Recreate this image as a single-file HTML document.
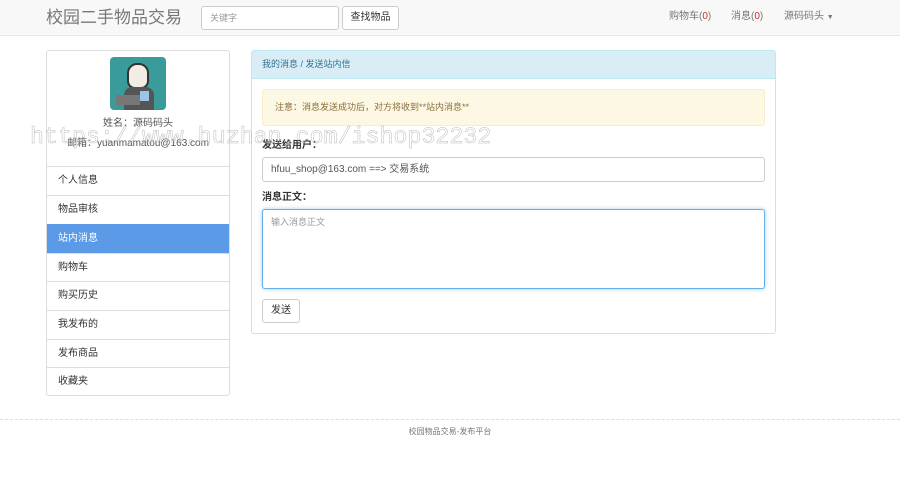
<!DOCTYPE html>
<html><head><meta charset="utf-8"><style>
*{box-sizing:border-box;margin:0;padding:0}
body{width:900px;height:494px;background:#fff;font-family:"Liberation Sans","Noto Sans CJK SC",sans-serif;font-size:10px;line-height:12px;color:#333;position:relative;overflow:hidden}
.a{position:absolute}
.nav{left:0;top:0;width:900px;height:36px;background:#f8f8f8;border-bottom:1px solid #e7e7e7}
.in{border:1px solid #ccc;border-radius:3px;background:#fff}
.side{left:46px;top:50px;width:184px;height:346px;border:1px solid #ddd;border-radius:3px}
.li{position:absolute;left:0;width:182px;height:29px;border-top:1px solid #ddd;padding:8px 0 0 11px;font-size:10px}
</style></head><body>
<div class="a nav"></div>
<div class="a" style="left:46px;top:8px;font-size:17px;line-height:20px;color:#777">校园二手物品交易</div>
<div class="a in" style="left:201px;top:6px;width:138px;height:24px;padding:5px 8px;color:#999;font-size:9px">关键字</div>
<div class="a in" style="left:342px;top:6px;width:57px;height:24px;padding:5px 0;text-align:center;font-size:10px">查找物品</div>
<div class="a" style="left:669px;top:11px;color:#777">购物车(<span style="color:#c9302c">0</span>)</div>
<div class="a" style="left:731px;top:11px;color:#777">消息(<span style="color:#c9302c">0</span>)</div>
<div class="a" style="left:784px;top:11px;color:#777">源码码头 <span style="font-size:7px">▼</span></div>

<div class="a side">
<div class="a" style="left:63px;top:6px;width:56px;height:53px;background:#3a9c9a;border-radius:4px;overflow:hidden">
<div class="a" style="left:17px;top:6px;width:22px;height:26px;background:#f1ece4;border:2px solid #333;border-radius:10px 10px 8px 8px"></div>
<div class="a" style="left:14px;top:30px;width:30px;height:23px;background:#555;border-radius:8px 8px 0 0"></div>
<div class="a" style="left:6px;top:38px;width:24px;height:10px;background:#777"></div>
<div class="a" style="left:30px;top:34px;width:9px;height:10px;background:#9cc3e8"></div>
</div>
<div class="a" style="left:0;top:67px;width:182px;text-align:center;color:#555">姓名：源码码头</div>
<div class="a" style="left:0;top:87px;width:182px;text-align:center;color:#555">邮箱：yuanmamatou@163.com</div>
<div class="li" style="top:115px">个人信息</div>
<div class="li" style="top:144px">物品审核</div>
<div class="li" style="top:173px;background:#5b9ae6;color:#fff;border-color:#5b9ae6">站内消息</div>
<div class="li" style="top:202px">购物车</div>
<div class="li" style="top:230px">购买历史</div>
<div class="li" style="top:259px">我发布的</div>
<div class="li" style="top:288px">发布商品</div>
<div class="li" style="top:316px">收藏夹</div>
</div>

<div class="a" style="left:251px;top:50px;width:525px;height:284px;border:1px solid #bce8f1;border-radius:3px">
<div style="height:28px;background:#d9edf7;border-bottom:1px solid #bce8f1;padding:7px 10px;color:#31708f;font-size:9px">我的消息 / 发送站内信</div>
</div>
<div class="a" style="left:262px;top:89px;width:503px;height:37px;background:#fcf8e3;border:1px solid #faebcc;border-radius:3px;padding:11px 12px;color:#8a6d3b;font-size:9px">注意：消息发送成功后，对方将收到**站内消息**</div>
<div class="a" style="left:262px;top:140px;font-weight:bold;font-size:10px">发送给用户：</div>
<div class="a in" style="left:262px;top:157px;width:503px;height:25px;padding:6px 8px;color:#555;font-size:10px">hfuu_shop@163.com ==&gt; 交易系统</div>
<div class="a" style="left:262px;top:192px;font-weight:bold;font-size:10px">消息正文：</div>
<div class="a in" style="left:262px;top:209px;width:503px;height:80px;border-color:#66afe9;box-shadow:0 0 4px rgba(102,175,233,.6);padding:6px 8px;color:#999;font-size:9px">输入消息正文</div>
<div class="a in" style="left:262px;top:299px;width:38px;height:24px;padding:5px 0;text-align:center">发送</div>

<div class="a" style="left:0;top:419px;width:900px;border-top:1px dashed #ddd"></div>
<div class="a" style="left:0;top:426px;width:900px;text-align:center;font-size:8px;color:#777">校园物品交易-发布平台</div>

<div class="a" style="left:30px;top:124px;font-family:'Liberation Mono',monospace;font-size:23.3px;line-height:26px;color:transparent;-webkit-text-stroke:0.5px #bbb;white-space:nowrap">https://www.huzhan.com/ishop32232</div>
</body></html>
